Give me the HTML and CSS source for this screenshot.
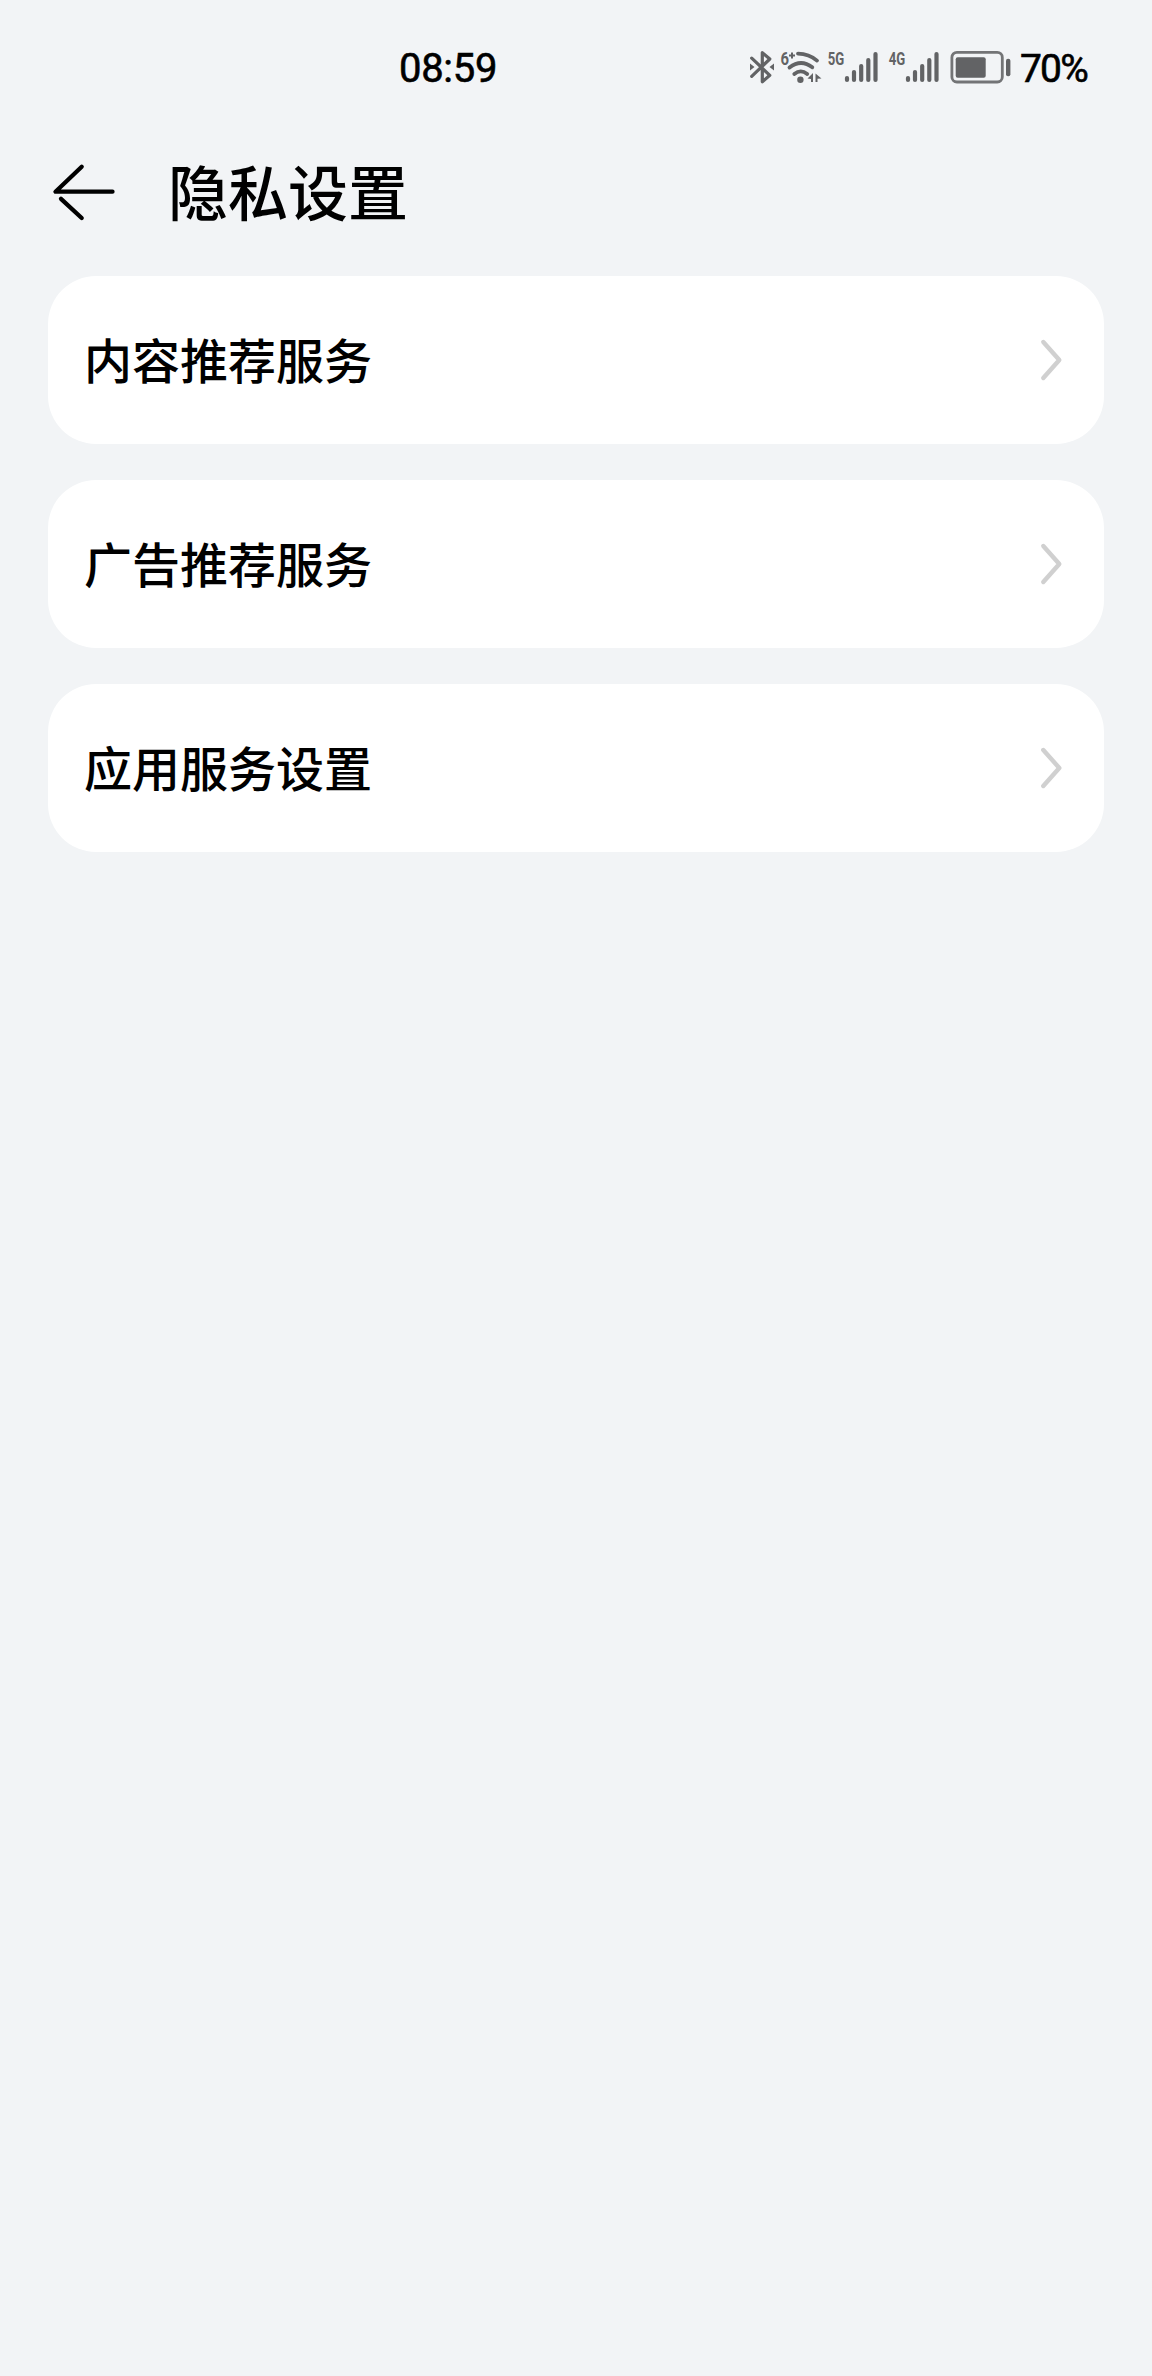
FILE: index.html
```html
<!DOCTYPE html>
<html lang="zh-CN">
<head>
  <meta charset="UTF-8" />
  <meta name="viewport" content="width=device-width, initial-scale=1.0">
  <title>隐私设置</title>
  <link rel="stylesheet" href="styles.css">
</head>
<body>
  <div class="status-bar">
    <span class="time">08:59</span>
    <div class="status-icons">
      <!-- Bluetooth -->
      <svg width="26" height="36" viewBox="0 0 26 36">
        <path class="line" d="M3.7 8.2 L21.8 25.3 L14.3 31.8 V20 M14.3 14 V2.6 L21.8 9 L3.7 26.3" />
        <path class="solid" d="M2 13.5 L6.5 17 L2 20.5 Z M26 13.5 L21.5 17 L26 20.5 Z" />
      </svg>
      <!-- Wi-Fi -->
      <svg width="39" height="36" viewBox="0 0 39 36">
        <text class="label" x="-0.5" y="15.2" textLength="8.5" lengthAdjust="spacingAndGlyphs">6</text>
        <path class="line thin" d="M8 5.5 H14 M11 2.5 V8.5" />
        <path class="line arc" d="M17 3.6 Q28 3.7 36 10.6" />
        <path class="line arc" d="M8.5 17.5 Q20 8.5 31.3 17.3" />
        <path class="line arc" d="M13.3 24 Q19.8 18.8 26.2 24" />
        <circle class="solid" cx="19.4" cy="29.7" r="3.2" />
        <path class="solid" d="M26.5 28.5 L32 23 V32 H30 V29 Z M34.5 23.5 L40.5 28.5 L36.5 28.8 V32 H34.5 Z" />
      </svg>
      <!-- SIM 1 -->
      <svg width="54" height="36" viewBox="0 0 54 36">
        <text class="label" x="0.8" y="15.2" textLength="16.5" lengthAdjust="spacingAndGlyphs">5G</text>
        <path class="bars" d="M20 28 V30 M27 22 V30 M34.2 16 V30 M41.3 10 V30 M48.5 4 V30" />
      </svg>
      <!-- SIM 2 -->
      <svg width="54" height="36" viewBox="0 0 54 36">
        <text class="label" x="0.8" y="15.2" textLength="16.5" lengthAdjust="spacingAndGlyphs">4G</text>
        <path class="bars" d="M20 28 V30 M27 22 V30 M34.2 16 V30 M41.3 10 V30 M48.5 4 V30" />
      </svg>
      <!-- Battery -->
      <svg width="64" height="36" viewBox="0 0 64 36">
        <rect class="case" x="2.9" y="2.4" width="50.4" height="29.6" rx="5" />
        <rect class="solid" x="6.7" y="7.3" width="30" height="20.4" rx="2" />
        <rect class="solid" x="57" y="8.8" width="4.4" height="17.4" rx="2" />
      </svg>
      <span class="percent">70%</span>
    </div>
  </div>

  <header class="header">
    <svg class="back" width="64" height="64" viewBox="0 0 64 64">
      <path d="M33.7 6.8 L7.5 31.7 H64.5 M13 38.8 L33.7 58" />
    </svg>
    <h1>隐私设置</h1>
  </header>

  <main class="list">
    <a class="card">
      <span>内容推荐服务</span>
      <svg class="chevron" width="24" height="44" viewBox="0 0 24 44"><path d="M3.3 4 L19.3 22 L3.3 40" /></svg>
    </a>
    <a class="card">
      <span>广告推荐服务</span>
      <svg class="chevron" width="24" height="44" viewBox="0 0 24 44"><path d="M3.3 4 L19.3 22 L3.3 40" /></svg>
    </a>
    <a class="card">
      <span>应用服务设置</span>
      <svg class="chevron" width="24" height="44" viewBox="0 0 24 44"><path d="M3.3 4 L19.3 22 L3.3 40" /></svg>
    </a>
  </main>
</body>
</html>
```

FILE: styles.css
```css
* {
  box-sizing: border-box;
}
body {
  margin: 0;
  min-height: 2376px;
  background: #f2f4f6;
  color: #000;
  font-family: "Noto Sans CJK SC", sans-serif;
  font-weight: 500;
}
svg {
  display: block;
  flex: none;
  overflow: visible;
}
.status-bar {
  display: flex;
  justify-content: space-between;
  align-items: center;
  height: 136px;
  padding: 0 60px 0 399px;
  font-family: Roboto, sans-serif;
  font-weight: 400;
  -webkit-text-stroke: 0.6px #000;
}
.time {
  padding-top: 2px;
  font-size: 40px;
  line-height: 48px;
  letter-spacing: -0.3px;
}
.status-icons {
  display: flex;
  align-items: center;
  gap: 7px;
  width: 344px;
}
.percent {
  padding-top: 1px;
  font-size: 39px;
  line-height: 44px;
  letter-spacing: -1.8px;
}
.line {
  fill: none;
  stroke: #626365;
  stroke-width: 3.2;
  stroke-linecap: round;
  stroke-linejoin: round;
}
.arc {
  stroke-width: 3.8;
}
.thin {
  stroke-width: 2;
  stroke-linecap: butt;
}
.solid {
  fill: #626365;
}
.label {
  fill: #626365;
  font-family: Roboto, sans-serif;
  font-size: 18px;
  font-weight: 700;
  letter-spacing: 0;
  -webkit-text-stroke: 0;
}
.bars {
  stroke: #626365;
  stroke-width: 4.2;
  stroke-linecap: round;
}
.case {
  fill: none;
  stroke: #737476;
  stroke-width: 2.8;
}
.header {
  display: flex;
  align-items: center;
  gap: 56px;
  height: 112px;
  padding-left: 48px;
}
.header h1 {
  margin: 0;
  padding-bottom: 5px;
  font-size: 60px;
  line-height: 80px;
  font-weight: 500;
}
.back path {
  fill: none;
  stroke: #000;
  stroke-width: 4.3;
  stroke-linecap: round;
  stroke-linejoin: round;
}
.list {
  display: flex;
  flex-direction: column;
  gap: 36px;
  padding: 28px 48px;
}
.card {
  display: flex;
  justify-content: space-between;
  align-items: center;
  height: 168px;
  padding: 0 40px 0 36px;
  border-radius: 48px;
  background: #fff;
  font-size: 48px;
  line-height: 64px;
}
.card span {
  padding-bottom: 5px;
}
.chevron path {
  fill: none;
  stroke: #d0d0d0;
  stroke-width: 4.4;
  stroke-linecap: round;
  stroke-linejoin: round;
}
```
